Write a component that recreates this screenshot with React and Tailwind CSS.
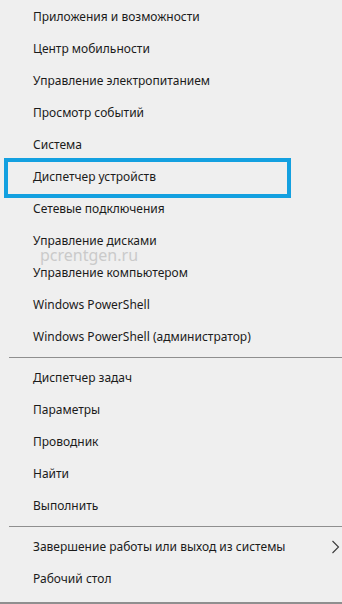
import React from 'react';

const groupA = [
  'Приложения и возможности',
  'Центр мобильности',
  'Управление электропитанием',
  'Просмотр событий',
  'Система',
  'Диспетчер устройств',
  'Сетевые подключения',
  'Управление дисками',
  'Управление компьютером',
  'Windows PowerShell',
  'Windows PowerShell (администратор)',
];

const groupB = ['Диспетчер задач', 'Параметры', 'Проводник', 'Найти', 'Выполнить'];

function Item({ label, highlighted, arrow }) {
  return (
    <div className="relative flex h-[32px] items-center pl-[33px] pr-[2px]">
      <span className="text-[12px] text-[#1b1b1b]">{label}</span>
      {arrow && (
        <svg className="ml-auto h-[14px] w-[9px]" viewBox="0 0 9 14" fill="none">
          <path d="M1.5 1 L7.5 7 L1.5 13" stroke="#3a3a3a" strokeWidth="1.1" />
        </svg>
      )}
      {highlighted && (
        <div className="absolute left-[4px] top-[-3px] h-[40px] w-[287px] border-4 border-[#13a0e0]" />
      )}
    </div>
  );
}

function Divider() {
  return (
    <div className="flex h-[9px] items-center pl-[9px]">
      <div className="h-px w-full bg-[#8f8f8f]" />
    </div>
  );
}

export default function App() {
  return (
    <div
      className="relative flex h-[604px] w-[342px] flex-col overflow-hidden bg-[#efefef] pt-px"
      style={{ fontFamily: '"Noto Sans", "Open Sans", sans-serif' }}
    >
      {groupA.map((l) => (
        <Item key={l} label={l} highlighted={l === 'Диспетчер устройств'} />
      ))}
      <Divider />
      {groupB.map((l) => (
        <Item key={l} label={l} />
      ))}
      <Divider />
      <Item label="Завершение работы или выход из системы" arrow />
      <Item label="Рабочий стол" />
      <div className="mt-auto h-[2px] w-full bg-[#8f8f8f]" />

      {/* watermark */}
      <span className="pointer-events-none absolute left-[40px] top-[245px] text-[16px] leading-[20px] text-[#cacaca]">
        pcrentgen.ru
      </span>
    </div>
  );
}
